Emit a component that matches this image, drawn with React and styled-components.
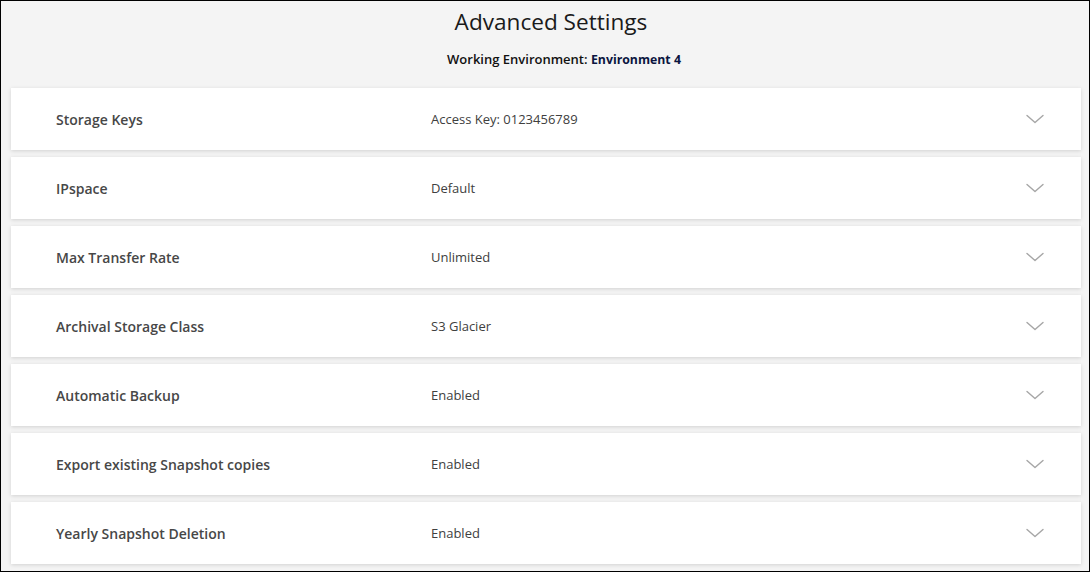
import React from 'react';
import styled, { createGlobalStyle } from 'styled-components';

const GlobalStyle = createGlobalStyle`
  html, body {
    margin: 0;
    padding: 0;
    background: #ffffff;
  }
  body {
    font-family: "Open Sans", "Liberation Sans", sans-serif;
  }
`;

const rows = [
  { label: 'Storage Keys', value: 'Access Key: 0123456789' },
  { label: 'IPspace', value: 'Default' },
  { label: 'Max Transfer Rate', value: 'Unlimited' },
  { label: 'Archival Storage Class', value: 'S3 Glacier' },
  { label: 'Automatic Backup', value: 'Enabled' },
  { label: 'Export existing Snapshot copies', value: 'Enabled' },
  { label: 'Yearly Snapshot Deletion', value: 'Enabled' },
];

function Chevron() {
  return (
    <svg width="18" height="10" viewBox="0 0 18 10" fill="none">
      <path d="M1 1.5 L9 8.5 L17 1.5" stroke="#a6a6a6" strokeWidth="1.4" strokeLinecap="round" strokeLinejoin="round" />
    </svg>
  );
}

function App() {
  return (
    <>
      <GlobalStyle />
      <Frame>
        <Header>
          <Title>Advanced Settings</Title>
          <Subtitle>
            Working Environment: <EnvName>Environment 4</EnvName>
          </Subtitle>
        </Header>
        <List>
          {rows.map((row) => (
            <Card key={row.label}>
              <Label>{row.label}</Label>
              <Value>{row.value}</Value>
              <Toggle>
                <Chevron />
              </Toggle>
            </Card>
          ))}
        </List>
      </Frame>
    </>
  );
}

const Frame = styled.div`
  box-sizing: border-box;
  width: 1090px;
  height: 572px;
  border: 1px solid #000;
  background: #f4f4f4;
  overflow: hidden;
  display: flex;
  flex-direction: column;
`;

const Header = styled.header`
  display: flex;
  flex-direction: column;
  align-items: center;
  padding-top: 6px;
  height: 87px;
  box-sizing: border-box;
`;

const Title = styled.h1`
  margin: 0;
  font-size: 22.6px;
  line-height: 30px;
  font-weight: 400;
  color: #1a1a1a;
  transform: translateX(6px);
`;

const Subtitle = styled.div`
  margin-top: 13px;
  font-size: 13px;
  line-height: 18px;
  font-weight: 600;
  color: #111;
  transform: translateX(19px);
`;

const EnvName = styled.span`
  font-size: 12.3px;
  font-weight: 700;
  color: #0b1540;
`;

const List = styled.div`
  display: flex;
  flex-direction: column;
  gap: 7px;
  padding: 0 8px 0 10px;
`;

const Card = styled.div`
  display: grid;
  grid-template-columns: 375px 1fr auto;
  align-items: center;
  height: 62px;
  padding: 0 37px 0 45px;
  box-sizing: border-box;
  background: #fff;
  box-shadow: 0 1px 4px rgba(0, 0, 0, 0.14);
`;

const Label = styled.div`
  font-size: 14px;
  font-weight: 600;
  color: #474747;
`;

const Value = styled.div`
  font-size: 13px;
  font-weight: 400;
  color: #404040;
`;

const Toggle = styled.div`
  display: flex;
  align-items: center;
`;

export default App;
